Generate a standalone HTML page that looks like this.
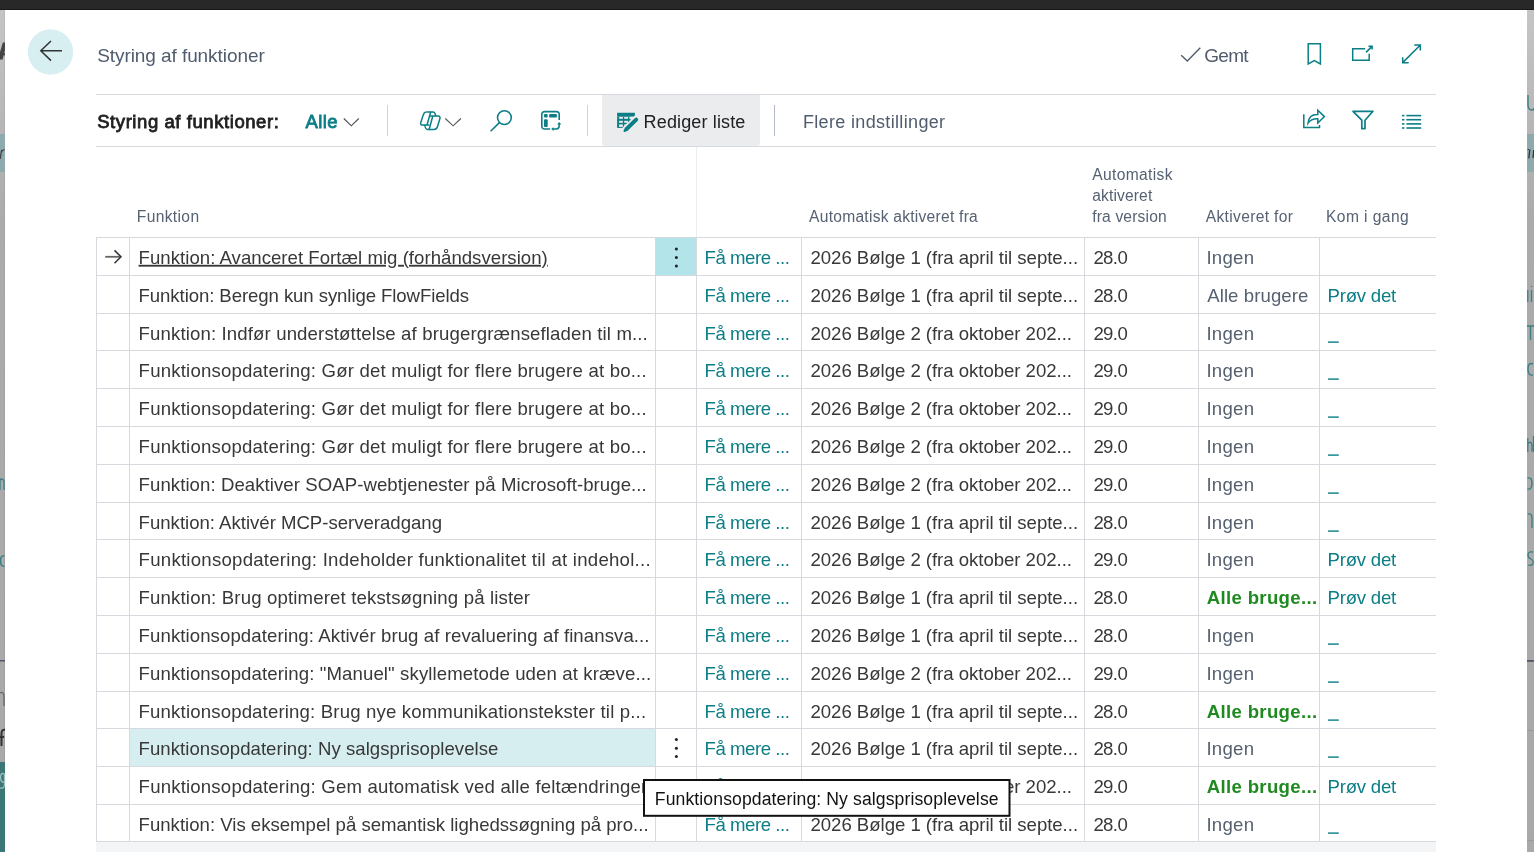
<!DOCTYPE html>
<html><head><meta charset="utf-8">
<style>
*{box-sizing:border-box;margin:0;padding:0}
html,body{width:1534px;height:852px;overflow:hidden;background:#fff}
svg{position:absolute;left:0;top:0;font-family:"Liberation Sans",sans-serif;will-change:transform}
text{white-space:pre}
</style></head><body>
<svg width="1534" height="852" viewBox="0 0 1534 852">
<!-- overlay strips -->
<defs><linearGradient id="sg" x1="0" y1="0" x2="0" y2="1"><stop offset="0" stop-color="#c5c5c5"/><stop offset="0.25" stop-color="#ababab"/><stop offset="1" stop-color="#a9a9a9"/></linearGradient></defs>
<rect x="0" y="0" width="1534" height="10" fill="#282828"/>
<rect x="0" y="9" width="1534" height="1" fill="#1a1a1a"/>
<rect x="0" y="10" width="5" height="842" fill="url(#sg)"/>
<rect x="4" y="10" width="1" height="842" fill="#000" opacity="0.05"/>
<rect x="0" y="134" width="5" height="38" fill="#8eaaad"/>
<rect x="0" y="762" width="5" height="90" fill="#3b7777"/>
<rect x="0" y="660" width="5" height="1.5" fill="#50586a"/>
<path d="M0 52L2.8 42.5H5V50L2.6 59.5H0Z" fill="#454545"/><rect x="3.4" y="53.2" width="1.6" height="2.2" fill="#454545"/>
<path d="M1.6 150L0.2 159M1.4 152Q2.6 149.5 4.6 149.6" stroke="#444" stroke-width="1.3" fill="none"/>
<path d="M0 478V490M0 480Q3 478 4 481V490" stroke="#3b7f84" stroke-width="1.3" fill="none"/>
<path d="M4.5 556Q0.5 555 0.5 561Q0.5 567 4.5 566" stroke="#3b7f84" stroke-width="1.4" fill="none"/>
<path d="M0 693Q3.5 691 4 696V706" stroke="#666" stroke-width="1.3" fill="none"/>
<path d="M1.5 746V733Q2 729 5 730M0 737H4" stroke="#333" stroke-width="2" fill="none"/>
<path d="M4.5 774Q0.5 772 0.5 778Q1 783 4.5 782M4.5 774V785Q4 789 0 788" stroke="#9fc0c0" stroke-width="1.3" fill="none"/>

<rect x="1527" y="10" width="7" height="842" fill="url(#sg)"/>
<rect x="1527" y="134" width="7" height="38" fill="#8eaaad"/>
<path d="M1528 95V105Q1528 110 1532 110Q1534 110 1534 108" stroke="#3b7f84" stroke-width="1.4" fill="none"/>
<path d="M1529.8 149.5L1528.8 158.5M1528.3 149V150M1533.8 150L1533 158" stroke="#333" stroke-width="1.3" fill="none"/>
<path d="M1527.8 290V302M1531.5 290V302M1531.5 286V287" stroke="#3b7f84" stroke-width="1.3" fill="none"/>
<path d="M1527 326H1534M1530.5 326V340" stroke="#3b7f84" stroke-width="1.4" fill="none"/>
<path d="M1533 364Q1528 362 1528 369Q1528 376 1533 375" stroke="#3b7f84" stroke-width="1.4" fill="none"/>
<path d="M1527.8 438V452M1527.8 444Q1531 440 1532 445V452M1533.5 436V452" stroke="#3b7f84" stroke-width="1.3" fill="none"/>
<path d="M1527.5 478Q1532 477 1532 483Q1532 490 1527.5 489" stroke="#3b7f84" stroke-width="1.4" fill="none"/>
<path d="M1527.8 514Q1532 513 1532 518V528" stroke="#3b7f84" stroke-width="1.3" fill="none"/>
<path d="M1533 552Q1528 551 1528 555Q1528 558 1531 559Q1534 560 1533 564Q1531 566 1528 565" stroke="#3b7f84" stroke-width="1.3" fill="none"/>
<rect x="1527" y="660" width="7" height="1.8" fill="#50586a"/>
<rect x="1527" y="730" width="7" height="1" fill="#9a9a9a"/>
<rect x="1527" y="840" width="7" height="1" fill="#9a9a9a"/>

<!-- back button -->
<circle cx="50.5" cy="52" r="22.7" fill="#d8eff2"/>
<path d="M62 50.8H41M51 41L40.8 50.8L51 60.6" fill="none" stroke="#333" stroke-width="1.5"/>

<!-- top right icons -->
<path d="M1181.2 55.2L1187.3 60.9L1200.3 47.8" fill="none" stroke="#505c6d" stroke-width="1.4"/>
<g fill="none" stroke="#0b7e86" stroke-width="1.5">
<path d="M1308.2 43.8H1320.4V64L1314.3 60.6L1308.2 64Z"/>
<path d="M1365.2 48.8H1352.7V60.2H1369.2V53.8M1366 52.4L1372 46.4M1368.5 46.3H1372.1V49.6"/>
<path d="M1402.9 62.4L1420.1 45.2M1414.3 45H1420.3V50.6M1402.7 57.3V62.7H1408.7"/>
</g>

<rect x="96" y="94" width="1340" height="1" fill="#d6d9de"/>

<!-- toolbar -->
<path d="M343.8 118.5L351.3 125.8L358.8 118.5" fill="none" stroke="#505050" stroke-width="1.15"/>
<rect x="387" y="105" width="1" height="31" fill="#d0d3d8"/>
<!-- copilot -->
<g fill="none" stroke="#0b7e86" stroke-width="1.5" stroke-linejoin="round">
<path d="M426.6 112H433C434.6 112 435.3 113.3 435.8 116"/>
<path d="M426.6 112C424.7 112 423.8 113 423.2 115L420.8 122.4C420.2 124.3 421 125 422.9 125H429.3"/>
<path d="M430.7 112L427 125"/>
<path d="M429.8 116H438C439.8 116 440.4 117.1 439.8 119L437.5 126.5C437 128.4 436 129.5 434 129.5H427.6C426 129.5 425.2 128.3 424.7 125"/>
<path d="M432.8 116L429.1 129.5"/>
</g>
<path d="M445.3 118.5L453.1 125.8L460.9 118.5" fill="none" stroke="#585858" stroke-width="1.15"/>
<!-- search -->
<g fill="none" stroke="#0b7e86" stroke-width="1.6">
<circle cx="504.4" cy="117.6" r="6.9"/>
<path d="M499.4 122.6L490.6 131.2"/>
</g>
<!-- layout icon -->
<path d="M550.1 129H544.4A2.6 2.6 0 0 1 541.8 126.4V114.2A2.6 2.6 0 0 1 544.4 111.6H556.6A2.6 2.6 0 0 1 559.2 114.2V120.1" fill="none" stroke="#0b7e86" stroke-width="1.6"/>
<g fill="#0b7e86">
<rect x="544" y="114" width="3.7" height="3.5" rx="1"/>
<rect x="549.1" y="114" width="7.8" height="3.5" rx="1"/>
<rect x="544" y="119.3" width="3.7" height="7.6" rx="1"/>
<path d="M557.1 124.4L559.2 122.1L561.3 124.4Z"/>
<path d="M553.5 126.9L551.2 129L553.5 131.1Z"/>
</g>
<path d="M559.2 123.5V125.8A3.2 3.2 0 0 1 556 129H553" fill="none" stroke="#0b7e86" stroke-width="1.5"/>
<rect x="587" y="105" width="1" height="31" fill="#d0d3d8"/>

<!-- rediger liste -->
<path d="M602 95H760V143A3 3 0 0 1 757 146H605A3 3 0 0 1 602 143Z" fill="#ebecee"/>
<g fill="#0b7e86">
<rect x="617.1" y="112.75" width="17.8" height="3.8"/>
<rect x="617.1" y="116.5" width="13.5" height="11.4"/>
</g>
<g fill="#ebecee">
<rect x="619.1" y="117" width="3.8" height="1.8"/><rect x="624.2" y="117" width="3.8" height="1.8"/><rect x="629.3" y="117" width="3" height="1.8"/>
<rect x="619.1" y="120.8" width="3.8" height="2"/><rect x="624.2" y="120.8" width="3.8" height="2"/>
<rect x="619.1" y="124.4" width="3.8" height="2.5"/><rect x="624.2" y="124.4" width="3.8" height="2.5"/>
</g>
<path d="M624.5 131L637.5 118.3" stroke="#ebecee" stroke-width="7.5" stroke-linecap="round"/>
<path d="M626.3 129.2L636.2 119.6" stroke="#0b7e86" stroke-width="4" stroke-linecap="round"/>
<path d="M624.6 130.9L627 128.5" stroke="#0b7e86" stroke-width="2.2" stroke-linecap="round"/>
<rect x="774" y="105" width="1" height="31" fill="#b4bac4"/>

<!-- right toolbar icons -->
<g fill="none" stroke="#0b7e86" stroke-width="1.5">
<path d="M1303.8 114.2V127.6H1319.5V125"/>
<path d="M1308 123.2C1308.5 116.5 1313 114.2 1317.8 114.4V110.3L1324.4 116.6L1317.8 123V118.8C1313.5 118.6 1310.2 120 1308 123.2Z"/>
<path d="M1353 111.3H1373L1365 120.2V128.6H1361.8V120.2Z" stroke-linejoin="round" stroke-width="1.7"/>
</g>
<g fill="#0b7e86">
<rect x="1402" y="114.8" width="2.4" height="1.6"/><rect x="1406.4" y="114.8" width="14.8" height="1.6"/>
<rect x="1402" y="118.9" width="2.4" height="1.6"/><rect x="1406.4" y="118.9" width="14.8" height="1.6"/>
<rect x="1402" y="123.1" width="2.4" height="1.6"/><rect x="1406.4" y="123.1" width="14.8" height="1.6"/>
<rect x="1402" y="127.2" width="2.4" height="1.6"/><rect x="1406.4" y="127.2" width="14.8" height="1.6"/>
</g>

<rect x="96" y="146" width="1340" height="1" fill="#d6d9de"/>
<rect x="696" y="147" width="1" height="90" fill="#ebedf0"/>

<!-- highlights -->
<rect x="656" y="238" width="40" height="37" fill="#b2e4e9"/>
<rect x="130" y="729" width="525" height="37" fill="#d7eef1"/>
<rect x="96" y="842" width="1340" height="10" fill="#f4f5f7"/>

<rect x="96" y="237" width="1340" height="1" fill="#d6d9de"/>
<rect x="96" y="275" width="1340" height="1" fill="#d6d9de"/>
<rect x="96" y="313" width="1340" height="1" fill="#d6d9de"/>
<rect x="96" y="350" width="1340" height="1" fill="#d6d9de"/>
<rect x="96" y="388" width="1340" height="1" fill="#d6d9de"/>
<rect x="96" y="426" width="1340" height="1" fill="#d6d9de"/>
<rect x="96" y="464" width="1340" height="1" fill="#d6d9de"/>
<rect x="96" y="502" width="1340" height="1" fill="#d6d9de"/>
<rect x="96" y="539" width="1340" height="1" fill="#d6d9de"/>
<rect x="96" y="577" width="1340" height="1" fill="#d6d9de"/>
<rect x="96" y="615" width="1340" height="1" fill="#d6d9de"/>
<rect x="96" y="653" width="1340" height="1" fill="#d6d9de"/>
<rect x="96" y="691" width="1340" height="1" fill="#d6d9de"/>
<rect x="96" y="728" width="1340" height="1" fill="#d6d9de"/>
<rect x="96" y="766" width="1340" height="1" fill="#d6d9de"/>
<rect x="96" y="804" width="1340" height="1" fill="#d6d9de"/>
<rect x="96" y="841" width="1340" height="1" fill="#d6d9de"/>
<rect x="96" y="237" width="1" height="604" fill="#d6d9de"/>
<rect x="129" y="237" width="1" height="604" fill="#d6d9de"/>
<rect x="655" y="237" width="1" height="604" fill="#d6d9de"/>
<rect x="696" y="237" width="1" height="604" fill="#d6d9de"/>
<rect x="801" y="237" width="1" height="604" fill="#d6d9de"/>
<rect x="1084" y="237" width="1" height="604" fill="#d6d9de"/>
<rect x="1198" y="237" width="1" height="604" fill="#d6d9de"/>
<rect x="1319" y="237" width="1" height="604" fill="#d6d9de"/>

<!-- arrow row1 -->
<path d="M105.2 256.8H120.5" fill="none" stroke="#666" stroke-width="1.8"/><path d="M114.5 250.4L121 256.8L114.5 263.2" fill="none" stroke="#333" stroke-width="1.5"/>
<!-- dots -->
<g fill="#222">
<circle cx="676.4" cy="249" r="1.5"/><circle cx="676.4" cy="257.6" r="1.5"/><circle cx="676.4" cy="266" r="1.5"/>
<circle cx="676.4" cy="739.6" r="1.5"/><circle cx="676.4" cy="748.2" r="1.5"/><circle cx="676.4" cy="756.6" r="1.5"/>
</g>

<rect x="1328" y="341.4" width="10.8" height="1.4" fill="#0b7e86"/>
<rect x="1328" y="378.4" width="10.8" height="1.4" fill="#0b7e86"/>
<rect x="1328" y="416.4" width="10.8" height="1.4" fill="#0b7e86"/>
<rect x="1328" y="454.4" width="10.8" height="1.4" fill="#0b7e86"/>
<rect x="1328" y="492.4" width="10.8" height="1.4" fill="#0b7e86"/>
<rect x="1328" y="530.4" width="10.8" height="1.4" fill="#0b7e86"/>
<rect x="1328" y="643.4" width="10.8" height="1.4" fill="#0b7e86"/>
<rect x="1328" y="681.4" width="10.8" height="1.4" fill="#0b7e86"/>
<rect x="1328" y="719.4" width="10.8" height="1.4" fill="#0b7e86"/>
<rect x="1328" y="756.4" width="10.8" height="1.4" fill="#0b7e86"/>
<rect x="1328" y="832.4" width="10.8" height="1.4" fill="#0b7e86"/>

<text x="97.20" y="62.40" font-size="19" font-weight="400" fill="#505c6d" letter-spacing="-0.073">Styring af funktioner</text>
<text x="1204.30" y="62.00" font-size="19" font-weight="400" fill="#505c6d" letter-spacing="-0.758">Gemt</text>
<text x="97.20" y="128.00" font-size="18.5" font-weight="400" fill="#212121" letter-spacing="0.570" stroke="#212121" stroke-width="0.8">Styring af funktioner:</text>
<text x="305.50" y="128.00" font-size="18.5" font-weight="400" fill="#0b7e86" letter-spacing="0.413" stroke="#0b7e86" stroke-width="0.8">Alle</text>
<text x="643.60" y="127.90" font-size="18" font-weight="400" fill="#212121" letter-spacing="0.139">Rediger liste</text>
<text x="802.90" y="127.70" font-size="18" font-weight="400" fill="#505c6d" letter-spacing="0.341">Flere indstillinger</text>
<text x="136.80" y="221.90" font-size="15.6" font-weight="400" fill="#566273" letter-spacing="0.352">Funktion</text>
<text x="809.10" y="222.00" font-size="15.6" font-weight="400" fill="#566273" letter-spacing="0.250">Automatisk aktiveret fra</text>
<text x="1092.20" y="179.70" font-size="15.6" font-weight="400" fill="#566273" letter-spacing="0.352">Automatisk</text>
<text x="1092.20" y="200.80" font-size="15.6" font-weight="400" fill="#566273" letter-spacing="0.137">aktiveret</text>
<text x="1092.20" y="221.80" font-size="15.6" font-weight="400" fill="#566273" letter-spacing="0.167">fra version</text>
<text x="1205.70" y="221.80" font-size="15.6" font-weight="400" fill="#566273" letter-spacing="0.342">Aktiveret for</text>
<text x="1326.00" y="221.80" font-size="15.6" font-weight="400" fill="#566273" letter-spacing="0.421">Kom i gang</text>
<text x="138.60" y="263.80" font-size="18.6" font-weight="400" fill="#383838" letter-spacing="0.028" text-decoration="underline">Funktion: Avanceret Fortæl mig (forhåndsversion)</text>
<text x="704.50" y="263.80" font-size="18.6" font-weight="400" fill="#0b7e86" letter-spacing="-0.443">Få mere ...</text>
<text x="810.50" y="263.80" font-size="18.6" font-weight="400" fill="#383838" letter-spacing="-0.033">2026 Bølge 1 (fra april til septe...</text>
<text x="1093.40" y="263.80" font-size="18.6" font-weight="400" fill="#383838" letter-spacing="-0.616">28.0</text>
<text x="1206.40" y="263.80" font-size="18.6" font-weight="400" fill="#566170" letter-spacing="0.278">Ingen</text>
<text x="138.60" y="301.80" font-size="18.6" font-weight="400" fill="#383838" letter-spacing="-0.087">Funktion: Beregn kun synlige FlowFields</text>
<text x="704.50" y="301.80" font-size="18.6" font-weight="400" fill="#0b7e86" letter-spacing="-0.443">Få mere ...</text>
<text x="810.50" y="301.80" font-size="18.6" font-weight="400" fill="#383838" letter-spacing="-0.033">2026 Bølge 1 (fra april til septe...</text>
<text x="1093.40" y="301.80" font-size="18.6" font-weight="400" fill="#383838" letter-spacing="-0.616">28.0</text>
<text x="1207.20" y="301.80" font-size="18.6" font-weight="400" fill="#566170" letter-spacing="0.089">Alle brugere</text>
<text x="1327.50" y="301.80" font-size="18.6" font-weight="400" fill="#0b7e86" letter-spacing="-0.214">Prøv det</text>
<text x="138.60" y="339.80" font-size="18.6" font-weight="400" fill="#383838" letter-spacing="0.130">Funktion: Indfør understøttelse af brugergrænsefladen til m...</text>
<text x="704.50" y="339.80" font-size="18.6" font-weight="400" fill="#0b7e86" letter-spacing="-0.443">Få mere ...</text>
<text x="810.50" y="339.80" font-size="18.6" font-weight="400" fill="#383838" letter-spacing="-0.035">2026 Bølge 2 (fra oktober 202...</text>
<text x="1093.40" y="339.80" font-size="18.6" font-weight="400" fill="#383838" letter-spacing="-0.616">29.0</text>
<text x="1206.40" y="339.80" font-size="18.6" font-weight="400" fill="#566170" letter-spacing="0.278">Ingen</text>
<text x="138.60" y="376.80" font-size="18.6" font-weight="400" fill="#383838" letter-spacing="0.196">Funktionsopdatering: Gør det muligt for flere brugere at bo...</text>
<text x="704.50" y="376.80" font-size="18.6" font-weight="400" fill="#0b7e86" letter-spacing="-0.443">Få mere ...</text>
<text x="810.50" y="376.80" font-size="18.6" font-weight="400" fill="#383838" letter-spacing="-0.035">2026 Bølge 2 (fra oktober 202...</text>
<text x="1093.40" y="376.80" font-size="18.6" font-weight="400" fill="#383838" letter-spacing="-0.616">29.0</text>
<text x="1206.40" y="376.80" font-size="18.6" font-weight="400" fill="#566170" letter-spacing="0.278">Ingen</text>
<text x="138.60" y="414.80" font-size="18.6" font-weight="400" fill="#383838" letter-spacing="0.196">Funktionsopdatering: Gør det muligt for flere brugere at bo...</text>
<text x="704.50" y="414.80" font-size="18.6" font-weight="400" fill="#0b7e86" letter-spacing="-0.443">Få mere ...</text>
<text x="810.50" y="414.80" font-size="18.6" font-weight="400" fill="#383838" letter-spacing="-0.035">2026 Bølge 2 (fra oktober 202...</text>
<text x="1093.40" y="414.80" font-size="18.6" font-weight="400" fill="#383838" letter-spacing="-0.616">29.0</text>
<text x="1206.40" y="414.80" font-size="18.6" font-weight="400" fill="#566170" letter-spacing="0.278">Ingen</text>
<text x="138.60" y="452.80" font-size="18.6" font-weight="400" fill="#383838" letter-spacing="0.196">Funktionsopdatering: Gør det muligt for flere brugere at bo...</text>
<text x="704.50" y="452.80" font-size="18.6" font-weight="400" fill="#0b7e86" letter-spacing="-0.443">Få mere ...</text>
<text x="810.50" y="452.80" font-size="18.6" font-weight="400" fill="#383838" letter-spacing="-0.035">2026 Bølge 2 (fra oktober 202...</text>
<text x="1093.40" y="452.80" font-size="18.6" font-weight="400" fill="#383838" letter-spacing="-0.616">29.0</text>
<text x="1206.40" y="452.80" font-size="18.6" font-weight="400" fill="#566170" letter-spacing="0.278">Ingen</text>
<text x="138.60" y="490.80" font-size="18.6" font-weight="400" fill="#383838" letter-spacing="0.065">Funktion: Deaktiver SOAP-webtjenester på Microsoft-bruge...</text>
<text x="704.50" y="490.80" font-size="18.6" font-weight="400" fill="#0b7e86" letter-spacing="-0.443">Få mere ...</text>
<text x="810.50" y="490.80" font-size="18.6" font-weight="400" fill="#383838" letter-spacing="-0.035">2026 Bølge 2 (fra oktober 202...</text>
<text x="1093.40" y="490.80" font-size="18.6" font-weight="400" fill="#383838" letter-spacing="-0.616">29.0</text>
<text x="1206.40" y="490.80" font-size="18.6" font-weight="400" fill="#566170" letter-spacing="0.278">Ingen</text>
<text x="138.60" y="528.80" font-size="18.6" font-weight="400" fill="#383838" letter-spacing="-0.013">Funktion: Aktivér MCP-serveradgang</text>
<text x="704.50" y="528.80" font-size="18.6" font-weight="400" fill="#0b7e86" letter-spacing="-0.443">Få mere ...</text>
<text x="810.50" y="528.80" font-size="18.6" font-weight="400" fill="#383838" letter-spacing="-0.033">2026 Bølge 1 (fra april til septe...</text>
<text x="1093.40" y="528.80" font-size="18.6" font-weight="400" fill="#383838" letter-spacing="-0.616">28.0</text>
<text x="1206.40" y="528.80" font-size="18.6" font-weight="400" fill="#566170" letter-spacing="0.278">Ingen</text>
<text x="138.60" y="565.80" font-size="18.6" font-weight="400" fill="#383838" letter-spacing="0.251">Funktionsopdatering: Indeholder funktionalitet til at indehol...</text>
<text x="704.50" y="565.80" font-size="18.6" font-weight="400" fill="#0b7e86" letter-spacing="-0.443">Få mere ...</text>
<text x="810.50" y="565.80" font-size="18.6" font-weight="400" fill="#383838" letter-spacing="-0.035">2026 Bølge 2 (fra oktober 202...</text>
<text x="1093.40" y="565.80" font-size="18.6" font-weight="400" fill="#383838" letter-spacing="-0.616">29.0</text>
<text x="1206.40" y="565.80" font-size="18.6" font-weight="400" fill="#566170" letter-spacing="0.278">Ingen</text>
<text x="1327.50" y="565.80" font-size="18.6" font-weight="400" fill="#0b7e86" letter-spacing="-0.214">Prøv det</text>
<text x="138.60" y="603.80" font-size="18.6" font-weight="400" fill="#383838" letter-spacing="0.151">Funktion: Brug optimeret tekstsøgning på lister</text>
<text x="704.50" y="603.80" font-size="18.6" font-weight="400" fill="#0b7e86" letter-spacing="-0.443">Få mere ...</text>
<text x="810.50" y="603.80" font-size="18.6" font-weight="400" fill="#383838" letter-spacing="-0.033">2026 Bølge 1 (fra april til septe...</text>
<text x="1093.40" y="603.80" font-size="18.6" font-weight="400" fill="#383838" letter-spacing="-0.616">28.0</text>
<text x="1206.80" y="603.80" font-size="18.6" font-weight="700" fill="#1f8a1f" letter-spacing="0.321">Alle bruge...</text>
<text x="1327.50" y="603.80" font-size="18.6" font-weight="400" fill="#0b7e86" letter-spacing="-0.214">Prøv det</text>
<text x="138.60" y="641.80" font-size="18.6" font-weight="400" fill="#383838" letter-spacing="0.089">Funktionsopdatering: Aktivér brug af revaluering af finansva...</text>
<text x="704.50" y="641.80" font-size="18.6" font-weight="400" fill="#0b7e86" letter-spacing="-0.443">Få mere ...</text>
<text x="810.50" y="641.80" font-size="18.6" font-weight="400" fill="#383838" letter-spacing="-0.033">2026 Bølge 1 (fra april til septe...</text>
<text x="1093.40" y="641.80" font-size="18.6" font-weight="400" fill="#383838" letter-spacing="-0.616">28.0</text>
<text x="1206.40" y="641.80" font-size="18.6" font-weight="400" fill="#566170" letter-spacing="0.278">Ingen</text>
<text x="138.60" y="679.80" font-size="18.6" font-weight="400" fill="#383838" letter-spacing="0.110">Funktionsopdatering: &quot;Manuel&quot; skyllemetode uden at kræve...</text>
<text x="704.50" y="679.80" font-size="18.6" font-weight="400" fill="#0b7e86" letter-spacing="-0.443">Få mere ...</text>
<text x="810.50" y="679.80" font-size="18.6" font-weight="400" fill="#383838" letter-spacing="-0.035">2026 Bølge 2 (fra oktober 202...</text>
<text x="1093.40" y="679.80" font-size="18.6" font-weight="400" fill="#383838" letter-spacing="-0.616">29.0</text>
<text x="1206.40" y="679.80" font-size="18.6" font-weight="400" fill="#566170" letter-spacing="0.278">Ingen</text>
<text x="138.60" y="717.80" font-size="18.6" font-weight="400" fill="#383838" letter-spacing="0.158">Funktionsopdatering: Brug nye kommunikationstekster til p...</text>
<text x="704.50" y="717.80" font-size="18.6" font-weight="400" fill="#0b7e86" letter-spacing="-0.443">Få mere ...</text>
<text x="810.50" y="717.80" font-size="18.6" font-weight="400" fill="#383838" letter-spacing="-0.033">2026 Bølge 1 (fra april til septe...</text>
<text x="1093.40" y="717.80" font-size="18.6" font-weight="400" fill="#383838" letter-spacing="-0.616">28.0</text>
<text x="1206.80" y="717.80" font-size="18.6" font-weight="700" fill="#1f8a1f" letter-spacing="0.321">Alle bruge...</text>
<text x="138.60" y="754.80" font-size="18.6" font-weight="400" fill="#383838" letter-spacing="0.027">Funktionsopdatering: Ny salgsprisoplevelse</text>
<text x="704.50" y="754.80" font-size="18.6" font-weight="400" fill="#0b7e86" letter-spacing="-0.443">Få mere ...</text>
<text x="810.50" y="754.80" font-size="18.6" font-weight="400" fill="#383838" letter-spacing="-0.033">2026 Bølge 1 (fra april til septe...</text>
<text x="1093.40" y="754.80" font-size="18.6" font-weight="400" fill="#383838" letter-spacing="-0.616">28.0</text>
<text x="1206.40" y="754.80" font-size="18.6" font-weight="400" fill="#566170" letter-spacing="0.278">Ingen</text>
<text x="138.60" y="792.80" font-size="18.6" font-weight="400" fill="#383838" letter-spacing="0.183">Funktionsopdatering: Gem automatisk ved alle feltændringer</text>
<text x="704.50" y="792.80" font-size="18.6" font-weight="400" fill="#0b7e86" letter-spacing="-0.443">Få mere ...</text>
<text x="810.50" y="792.80" font-size="18.6" font-weight="400" fill="#383838" letter-spacing="-0.035">2026 Bølge 2 (fra oktober 202...</text>
<text x="1093.40" y="792.80" font-size="18.6" font-weight="400" fill="#383838" letter-spacing="-0.616">29.0</text>
<text x="1206.80" y="792.80" font-size="18.6" font-weight="700" fill="#1f8a1f" letter-spacing="0.321">Alle bruge...</text>
<text x="1327.50" y="792.80" font-size="18.6" font-weight="400" fill="#0b7e86" letter-spacing="-0.214">Prøv det</text>
<text x="138.60" y="830.80" font-size="18.6" font-weight="400" fill="#383838" letter-spacing="-0.004">Funktion: Vis eksempel på semantisk lighedssøgning på pro...</text>
<text x="704.50" y="830.80" font-size="18.6" font-weight="400" fill="#0b7e86" letter-spacing="-0.443">Få mere ...</text>
<text x="810.50" y="830.80" font-size="18.6" font-weight="400" fill="#383838" letter-spacing="-0.033">2026 Bølge 1 (fra april til septe...</text>
<text x="1093.40" y="830.80" font-size="18.6" font-weight="400" fill="#383838" letter-spacing="-0.616">28.0</text>
<text x="1206.40" y="830.80" font-size="18.6" font-weight="400" fill="#566170" letter-spacing="0.278">Ingen</text>

<!-- tooltip -->
<rect x="644" y="780" width="365.5" height="35.8" fill="#fff" stroke="#111" stroke-width="2"/>
<text x="654.80" y="804.70" font-size="17.6" font-weight="400" fill="#111" letter-spacing="0.108">Funktionsopdatering: Ny salgsprisoplevelse</text>
</svg>
</body></html>
